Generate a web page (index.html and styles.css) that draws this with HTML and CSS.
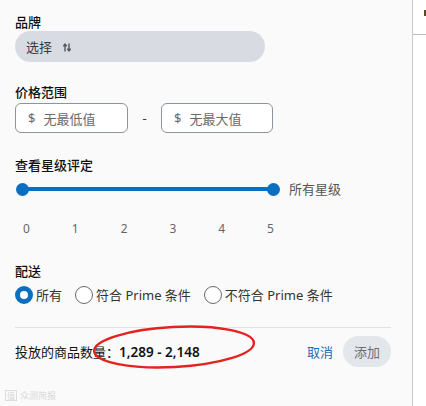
FILE: index.html
```html
<!DOCTYPE html>
<html lang="zh">
<head>
<meta charset="utf-8">
<link rel="stylesheet" href="styles.css">
</head>
<body>
<div class="page">
  <main class="panel">
    <section class="field brand">
      <div class="label">品牌</div>
      <div class="select">
        <span>选择</span>
        <svg class="sort" width="8" height="9" viewBox="0 0 8 9"><path d="M2 8.5V1.5M0.3 3.2 2 1.2 3.7 3.2M6 0.5V7.5M4.3 5.8 6 7.8 7.7 5.8" fill="none" stroke="#555" stroke-width="1.4"/></svg>
      </div>
    </section>

    <section class="field price">
      <div class="label">价格范围</div>
      <div class="range">
        <div class="input"><span class="cur">$</span><span class="ph">无最低值</span></div>
        <span class="dash">-</span>
        <div class="input"><span class="cur">$</span><span class="ph">无最大值</span></div>
      </div>
    </section>

    <section class="field rating">
      <div class="label">查看星级评定</div>
      <div class="slider-row">
        <div class="slider"><span class="thumb"></span><span class="track"></span><span class="thumb"></span></div>
        <span class="slider-label">所有星级</span>
      </div>
      <div class="ticks"><span>0</span><span>1</span><span>2</span><span>3</span><span>4</span><span>5</span></div>
    </section>

    <section class="field delivery">
      <div class="label">配送</div>
      <div class="radios">
        <label class="radio"><span class="dot checked"></span>所有</label>
        <label class="radio"><span class="dot"></span>符合 Prime 条件</label>
        <label class="radio"><span class="dot"></span>不符合 Prime 条件</label>
      </div>
    </section>

    <div class="divider"></div>

    <footer class="footer">
      <div class="count">投放的商品数量：<span class="num">1,289 - 2,148</span></div>
      <div class="actions"><span class="link">取消</span><span class="btn">添加</span></div>
    </footer>
  </main>
  <aside class="side"><div class="side-top"><span class="mark"></span></div></aside>

  <svg class="annotation" width="426" height="406" viewBox="0 0 426 406"><ellipse cx="174" cy="347" rx="80" ry="20" transform="rotate(-3 174 347)" fill="none" stroke="#e3231f" stroke-width="2.4"/></svg>
  <div class="watermark"><span class="wm-logo">值</span>众测简报</div>
</div>
</body>
</html>
```
FILE: styles.css
```css
* { box-sizing: border-box; }
html, body { margin: 0; padding: 0; }
body {
  background: #fafafa;
  font-family: "Noto Sans", "Noto Sans CJK SC", sans-serif;
  font-size: 13px;
  color: #111;
}
.page { position: relative; display: flex; width: 426px; height: 406px; overflow: hidden; }
.panel {
  width: 413px;
  height: 406px;
  border-right: 1px solid #c9c9c9;
  padding: 13px 21px 0 15px;
}
.label { font-size: 13px; line-height: 18px; font-weight: 500; color: #0f0f0f; }

.select {
  width: 250px; height: 31px; border-radius: 16px;
  background: #d8dce2;
  display: flex; align-items: center; gap: 11px;
  padding-left: 11px; color: #3a3a3a; line-height: 18px;
}
.sort { margin-top: 1px; }

.price { margin-top: 21px; }
.range { display: flex; align-items: center; margin-top: 2px; }
.input {
  height: 30px; width: 113px; border: 1px solid #8e949b; border-radius: 6px;
  background: #fff; display: flex; align-items: center; padding-left: 12px; gap: 8px; color: #6a6a6a;
}
.input:last-child { width: 112px; }
.cur { font-size: 13px; }
.dash { width: 33px; text-align: center; color: #333; }

.rating { margin-top: 23px; }
.slider-row { display: flex; align-items: center; height: 14px; margin-top: 8px; }
.slider { display: flex; align-items: center; width: 264px; margin-left: 1px; }
.thumb { width: 13px; height: 13px; border-radius: 50%; background: #0a6fc0; flex: none; }
.track { flex: 1; height: 4px; background: #0a6fc0; margin: 0 -1px; }
.slider-label { margin-left: 9px; color: #555; line-height: 18px; }
.ticks {
  display: flex; justify-content: space-between; width: 251px; margin: 25px 0 0 8px;
  font-size: 12px; line-height: 16px; color: #666;
}

.delivery { margin-top: 25px; }
.radios { display: flex; align-items: center; gap: 13px; height: 20px; margin-top: 5px; }
.radio { display: flex; align-items: center; gap: 2px; color: #333; line-height: 18px; }
.dot { width: 18px; height: 18px; border-radius: 50%; border: 1px solid #6b6b6b; background: #fff; flex: none; margin-right: 1px; }
.dot.checked { border: 5px solid #0a6fc0; }

.divider { height: 1px; background: #dfe2e6; margin-top: 22px; }
.footer { display: flex; align-items: center; justify-content: space-between; height: 31px; margin-top: 8px; }
.count { color: #111; }
.num { font-weight: 600; font-size: 13.5px; }
.actions { display: flex; align-items: center; gap: 10px; }
.link { color: #1b6eb0; }
.btn {
  width: 48px; height: 31px; border-radius: 16px; background: #e3e6ea; color: #6b6e73;
  display: flex; align-items: center; justify-content: center;
}

.side { flex: 1; background: #fff; }
.side-top { height: 35px; border-bottom: 1px solid #bdbdbd; position: relative; }
.mark { position: absolute; right: 0; top: 10px; width: 2px; height: 6px; background: #5a4a20; }

.annotation { position: absolute; left: 0; top: 0; pointer-events: none; }
.watermark {
  position: absolute; left: 5px; top: 390px; font-size: 9px; line-height: 11px;
  color: #d8d8d8; display: flex; align-items: center; gap: 3px;
}
.wm-logo { border: 1px solid #ddd; padding: 0 1px; font-size: 8px; line-height: 9px; }
```
